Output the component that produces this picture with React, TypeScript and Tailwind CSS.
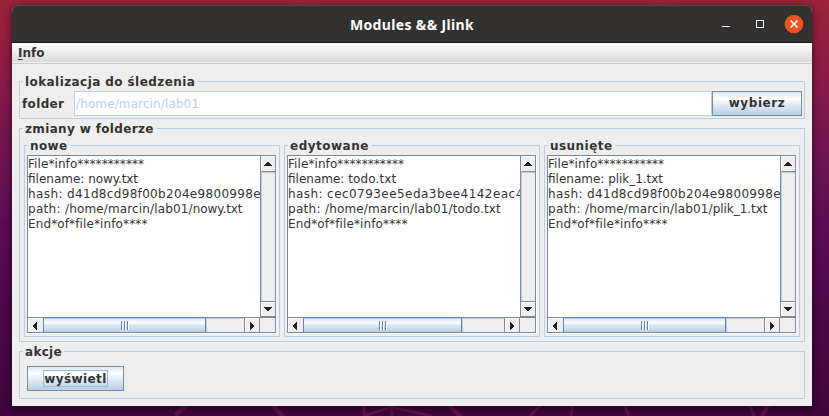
import type { ReactNode } from "react";

const FONT = "font-['DejaVu_Sans',sans-serif]";

function Group({ title, titleClass, className, children }: { title: string; titleClass: string; className: string; children: ReactNode }) {
  return (
    <section className={`relative border border-[#b8cfe5] ${className}`}>
      <div className={`absolute -top-[7px] left-[3px] h-[15px] bg-[#eeeeee] pl-[2px] text-[12px] leading-[15px] font-bold whitespace-nowrap ${titleClass}`}>
        {title}
      </div>
      {children}
    </section>
  );
}

function Arrow({ dir }: { dir: "up" | "down" | "left" | "right" }) {
  const rects = {
    up: [[3, 0, 2, 1], [2, 1, 4, 1], [1, 2, 6, 1], [0, 3, 8, 1]],
    down: [[0, 0, 8, 1], [1, 1, 6, 1], [2, 2, 4, 1], [3, 3, 2, 1]],
    left: [[3, 0, 1, 8], [2, 1, 1, 6], [1, 2, 1, 4], [0, 3, 1, 2]],
    right: [[0, 0, 1, 8], [1, 1, 1, 6], [2, 2, 1, 4], [3, 3, 1, 2]],
  }[dir];
  const tall = dir === "left" || dir === "right";
  return (
    <svg width={tall ? 4 : 8} height={tall ? 8 : 4} shapeRendering="crispEdges" fill="#222222">
      {rects.map(([x, y, w, h]) => (
        <rect key={`${x}-${y}`} x={x} y={y} width={w} height={h} />
      ))}
    </svg>
  );
}

function ScrollArea({ thumb, children }: { thumb: string; children: ReactNode }) {
  return (
    <div className="h-[179px] w-[250px] border-r border-b border-white">
      <div className="flex h-[178px] w-[249px] flex-col border border-[#7a8a99]">
        <div className="flex h-[161px]">
          <div className="w-[232px] overflow-hidden bg-white pt-px text-[12px] leading-[15px] whitespace-pre">{children}</div>
          <div className="flex w-[15px] flex-col border-l border-[#7a8a99]">
            <div className="flex h-[16px] items-center justify-center border-t border-l border-b border-t-white border-l-white border-b-[#7a8a99] pr-[2px]">
              <Arrow dir="up" />
            </div>
            <div className="grow border-t border-l border-[#b8cfe5]" />
            <div className="h-[16px] border-t border-b border-[#7a8a99]">
              <div className="flex h-full items-center justify-center border-t border-l border-white pr-[2px] pb-[2px]">
                <Arrow dir="down" />
              </div>
            </div>
          </div>
        </div>
        <div className="flex h-[15px] border-t border-[#7a8a99]">
          <div className="flex w-[15px] items-center justify-center border-t border-l border-white pr-[2px]">
            <Arrow dir="left" />
          </div>
          <div className={`-mt-px flex h-[15px] items-center justify-center border-x border-t border-[#6382bf] bg-[linear-gradient(#b8cfe5_0_1px,#dde8f3_1px,#ffffff_5px,#dde8f3_7px,#b8cfe5)] ${thumb}`}>
            <div className="flex h-[9px] gap-[1px]">
              <i className="w-[2px] border-l border-[#6382bf] bg-white" />
              <i className="w-[2px] border-l border-[#6382bf] bg-white" />
              <i className="w-[2px] border-l border-[#6382bf] bg-white" />
            </div>
          </div>
          <div className="grow border-t border-l border-[#b8cfe5]" />
          <div className="w-[16px] border-x border-[#7a8a99]">
            <div className="flex h-full items-center justify-center border-t border-l border-white pr-[2px]">
              <Arrow dir="right" />
            </div>
          </div>
          <div className="w-[15px]" />
        </div>
      </div>
    </div>
  );
}

const BUTTON = "flex items-center justify-center border border-[#7a8a99] bg-[linear-gradient(#dde8f3,#ffffff_30%,#dde8f3_58%,#b8cfe5)] text-[12px] font-bold";

const panels = [
  { title: "nowe", titleClass: "w-[43px] tracking-[0.4px]", thumb: "w-[163px]", name: "nowy.txt", nameClass: "tracking-[-0.1px]", hash: "d41d8cd98f00b204e9800998e", hashClass: "tracking-[0.32px]" },
  { title: "edytowane", titleClass: "w-[84px] tracking-[0.5px]", thumb: "w-[159px]", name: "todo.txt", nameClass: "tracking-[0.12px]", hash: "cec0793ee5eda3bee4142eac4", hashClass: "tracking-[0.45px]" },
  { title: "usunięte", titleClass: "w-[67px] tracking-[0.45px]", thumb: "w-[163px]", name: "plik_1.txt", nameClass: "tracking-[-0.05px]", hash: "d41d8cd98f00b204e9800998e", hashClass: "tracking-[0.32px]" },
];

export default function App() {
  return (
    <div className={`relative h-[416px] w-[829px] overflow-hidden bg-[linear-gradient(#9c2338,#8c1b46_18%,#70154f_35%,#5c0d56_55%,#4b0848_78%,#40053b)] px-[12px] pt-[5px] text-[#333333] ${FONT}`}>
      <svg className="absolute inset-0" width="829" height="416" fill="none" stroke="#611052" strokeWidth="2">
        <path d="M364 400V416M364 416L391 407L432 416M392 406V416M530 416L540 406M573 406L571 416M625 406L629 416M750 406L754 416M0 216L12 222" strokeWidth="3" />
        <path d="M272 404L284 418M175 415L186 406M448 404L462 418M768 406L762 416" strokeWidth="4.5" />
        <path d="M286 5L301 0L321 5ZM648 5L660 0L681 5Z" fill="#9e263a" stroke="none" />
      </svg>
      <div className="relative flex h-[401px] w-[800px] flex-col overflow-hidden rounded-t-[7px] bg-[#eeeeee] shadow-[0_2px_7px_1px_rgba(0,0,0,0.5)]">
        <header className="relative flex h-[38px] shrink-0 items-center justify-center border-t border-b border-t-[#4a4544] border-b-[#1d1818] bg-[#333030]">
          <h1 className="pt-px font-['Noto_Sans',sans-serif] text-[14px] font-bold tracking-[0.35px] text-white">Modules &amp;&amp; Jlink</h1>
          <svg className="absolute top-0 right-0" width="100" height="36" fill="none">
            <path d="M10 20.5H18" stroke="white" />
            <rect x="44.5" y="14.5" width="7" height="7" stroke="white" />
            <circle cx="82" cy="18" r="9.3" fill="#e95420" />
            <path d="M78.5 14.5L85.5 21.5M85.5 14.5L78.5 21.5" stroke="white" strokeWidth="1.5" />
          </svg>
        </header>
        <nav className="h-[21px] shrink-0 border-b border-[#cccccc] bg-[linear-gradient(#ffffff,#dadada_19px,#eeeeee_19px)] pl-[6px] text-[12px] leading-[21px] font-bold">
          <span className="block h-[20px]"><span className="underline decoration-1 underline-offset-2">I</span>nfo</span>
        </nav>
        <main className="flex flex-col px-[7px] pt-[17px]">
          <Group title="lokalizacja do śledzenia" titleClass="w-[174px] tracking-[0.42px]" className="h-[38px] w-[786px]">
            <div className="mt-[9px] flex h-[25px] pl-[2px] text-[12px] leading-[25px]">
              <label className="w-[52px] pt-px font-bold tracking-[0.35px]">folder</label>
              <div className="w-[638px] border border-[#b8cfe5] bg-white pl-px tracking-[0.12px] text-[#b8cfe5]">/home/marcin/lab01</div>
              <button className={`w-[90px] tracking-[0.55px] ${BUTTON}`}>wybierz</button>
            </div>
          </Group>
          <Group title="zmiany w folderze" titleClass="w-[133px] tracking-[0.35px]" className="mt-[9px] h-[214px] w-[786px]">
            <div className="flex gap-[4px] pt-[16px] pl-[4px]">
              {panels.map((p) => (
                <Group key={p.title} title={p.title} titleClass={p.titleClass} className="h-[192px] w-[256px] pt-[9px] pl-[2px]">
                  <ScrollArea thumb={p.thumb}>
                    <p className="tracking-[0.08px]">File*info***********</p>
                    <p>filename: <span className={p.nameClass}>{p.name}</span></p>
                    <p><span className="tracking-[0.4px]">hash: </span><span className={p.hashClass}>{p.hash}</span></p>
                    <p>
                      <span className="tracking-[0.31px]">path: </span>
                      <span className="tracking-[0.14px]">/home/marcin/lab01/</span>
                      <span className={p.nameClass}>{p.name}</span>
                    </p>
                    <p className="tracking-[0.12px]">End*of*file*info****</p>
                  </ScrollArea>
                </Group>
              ))}
            </div>
          </Group>
          <Group title="akcje" titleClass="w-[41px] tracking-[0.3px]" className="mt-[9px] h-[48px] w-[786px] pt-[14px] pl-[7px]">
            <button className={`h-[25px] w-[97px] tracking-[0.4px] ${BUTTON}`}>
              <span className="flex h-[17px] w-[65px] items-center justify-center border border-[#a3b8cc]">wyświetl</span>
            </button>
          </Group>
        </main>
      </div>
    </div>
  );
}
